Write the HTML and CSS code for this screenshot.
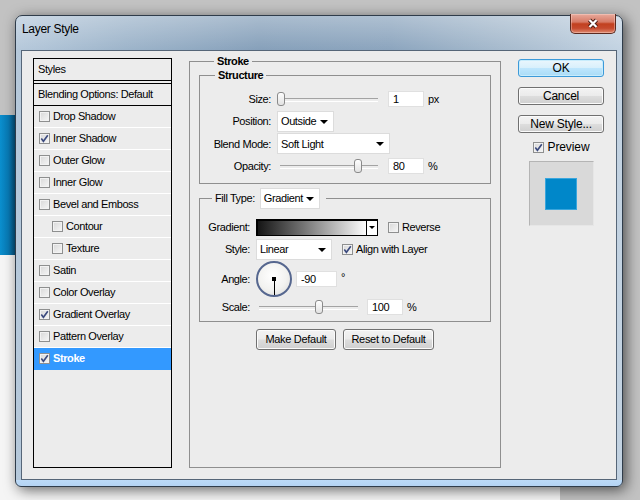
FILE: index.html
```html
<!DOCTYPE html>
<html lang="en">
<head>
    <meta charset="UTF-8">
    <title>Layer Style</title>
    <link rel="stylesheet" href="styles.css">
</head>
<body>
    <div class="window">
        <div class="titlebar">
            <span class="title">Layer Style</span>
            <div class="close">
                <svg width="14" height="11" viewBox="0 0 14 11">
                    <path d="M3.5 2 L10.5 9 M10.5 2 L3.5 9" stroke="#4b1d15" stroke-width="4.2"/>
                    <path d="M3.5 2 L10.5 9 M10.5 2 L3.5 9" stroke="#fff" stroke-width="2.2"/>
                </svg>
            </div>
        </div>

        <div class="client">
            <!-- styles list -->
            <div class="styles-list">
                <div class="list-head">Styles</div>
                <div class="list-blend">Blending Options: Default</div>
                <div class="item"><span class="cb"></span>Drop Shadow</div>
                <div class="item"><span class="cb"><svg width="9" height="9" viewBox="0 0 9 9"><path d="M1.3 4.6 L3.4 7.3 L7.8 1.2" fill="none" stroke="#3b4a7e" stroke-width="1.6"/></svg></span>Inner Shadow</div>
                <div class="item"><span class="cb"></span>Outer Glow</div>
                <div class="item"><span class="cb"></span>Inner Glow</div>
                <div class="item"><span class="cb"></span>Bevel and Emboss</div>
                <div class="item sub"><span class="cb"></span>Contour</div>
                <div class="item sub"><span class="cb"></span>Texture</div>
                <div class="item"><span class="cb"></span>Satin</div>
                <div class="item"><span class="cb"></span>Color Overlay</div>
                <div class="item"><span class="cb"><svg width="9" height="9" viewBox="0 0 9 9"><path d="M1.3 4.6 L3.4 7.3 L7.8 1.2" fill="none" stroke="#3b4a7e" stroke-width="1.6"/></svg></span>Gradient Overlay</div>
                <div class="item"><span class="cb"></span>Pattern Overlay</div>
                <div class="item sel"><span class="cb"><svg width="9" height="9" viewBox="0 0 9 9"><path d="M1.3 4.6 L3.4 7.3 L7.8 1.2" fill="none" stroke="#3b4a7e" stroke-width="1.6"/></svg></span>Stroke</div>
            </div>

            <!-- stroke settings -->
            <fieldset class="stroke-box">
                <legend>Stroke</legend>

                <fieldset class="group structure">
                    <legend>Structure</legend>
                    <div class="grid structure-grid">
                        <span class="lbl">Size:</span>
                        <div class="ctrl">
                            <div class="slider"><span class="thumb" style="left: 0px"></span></div>
                            <span class="field gap10">1</span>
                            <span class="unit">px</span>
                        </div>

                        <span class="lbl">Position:</span>
                        <div class="ctrl"><div class="select pos">Outside</div></div>

                        <span class="lbl">Blend Mode:</span>
                        <div class="ctrl"><div class="select blend">Soft Light</div></div>

                        <span class="lbl">Opacity:</span>
                        <div class="ctrl">
                            <div class="slider inset"><span class="thumb" style="left: 77px"></span></div>
                            <span class="field gap10">80</span>
                            <span class="unit">%</span>
                        </div>
                    </div>
                </fieldset>

                <fieldset class="group fill">
                    <legend><span>Fill Type:</span><div class="select filltype">Gradient</div></legend>
                    <div class="grid fill-grid">
                        <span class="lbl">Gradient:</span>
                        <div class="ctrl">
                            <div class="grad"><span class="grad-fill"></span><span class="grad-drop"></span></div>
                            <span class="cb gap10"></span>
                            <span class="cb-text">Reverse</span>
                        </div>

                        <span class="lbl">Style:</span>
                        <div class="ctrl">
                            <div class="select style">Linear</div>
                            <span class="cb gap10"><svg width="9" height="9" viewBox="0 0 9 9"><path d="M1.3 4.6 L3.4 7.3 L7.8 1.2" fill="none" stroke="#3b4a7e" stroke-width="1.6"/></svg></span>
                            <span class="cb-text">Align with Layer</span>
                        </div>

                        <span class="lbl">Angle:</span>
                        <div class="ctrl">
                            <div class="dial"></div>
                            <span class="field angle">-90</span>
                            <span class="deg">°</span>
                        </div>

                        <span class="lbl">Scale:</span>
                        <div class="ctrl">
                            <div class="slider scale"><span class="thumb" style="left: 59px"></span></div>
                            <span class="field gap9">100</span>
                            <span class="unit">%</span>
                        </div>
                    </div>
                </fieldset>

                <div class="defaults">
                    <button class="btn small make">Make Default</button>
                    <button class="btn small reset">Reset to Default</button>
                </div>
            </fieldset>

            <!-- dialog buttons -->
            <div class="side">
                <button class="btn big ok">OK</button>
                <button class="btn big">Cancel</button>
                <button class="btn big last">New Style...</button>
                <div class="preview-row">
                    <span class="cb"><svg width="9" height="9" viewBox="0 0 9 9"><path d="M1.3 4.6 L3.4 7.3 L7.8 1.2" fill="none" stroke="#3b4a7e" stroke-width="1.6"/></svg></span>
                    <span>Preview</span>
                </div>
                <div class="preview-box"><div class="swatch"></div></div>
            </div>
        </div>
    </div>
</body>
</html>
```

FILE: styles.css
```css
* {
    box-sizing: border-box;
}

body {
    margin: 0;
    width: 640px;
    height: 500px;
    overflow: hidden;
    position: relative;
    font-family: "Liberation Sans", Arial, sans-serif;
    font-size: 11px;
    letter-spacing: -0.4px;
    color: #000;
    background:
        linear-gradient(to right, #0b8fce, #0878b2 60%, #06527c) 0 115px / 15px 140px no-repeat,
        linear-gradient(#f5f5f5, #f5f5f5) 0 255px / 560px 245px no-repeat,
        #c2c2c2;
}

/* window frame */
.window {
    position: absolute;
    left: 15px;
    top: 15px;
    width: 608px;
    height: 472px;
    border: 1px solid #2f3c4a;
    border-radius: 7px 7px 6px 6px;
    padding: 0 5px 6px 5px;
    display: flex;
    flex-direction: column;
    box-shadow: 3px 3px 14px rgba(0, 0, 0, 0.6);
    background:
        linear-gradient(rgba(255, 255, 255, 0.3), rgba(255, 255, 255, 0) 34px) top / 100% 34px no-repeat,
        linear-gradient(#bcdaf7, #b4d3f3) bottom / 100% 6px no-repeat,
        linear-gradient(to right, #b6c9db 0%, #9db4ca 18%, #86a0ba 40%, #8ca5be 62%, #a6bacd 80%, #c3d3e2 100%);
}

.titlebar {
    height: 34px;
    display: flex;
    align-items: flex-start;
}

.title {
    font-size: 12px;
    letter-spacing: -0.3px;
    margin: 6px 0 0 1px;
}

.close {
    margin: -2px 1px 0 auto;
    width: 46px;
    height: 20px;
    border: 1px solid #5b2a20;
    border-top: none;
    border-radius: 0 0 5px 5px;
    display: flex;
    align-items: center;
    justify-content: center;
    background: linear-gradient(#e8aa9c, #d77a66 42%, #c2401f 52%, #c64a2e 75%, #df8a70);
    box-shadow: inset 0 0 0 1px rgba(255, 220, 210, 0.4);
}

.client {
    flex: 1;
    display: flex;
    align-items: flex-start;
    padding: 7px 0 0 11px;
    border: 1px solid #566678;
    background: #ececec;
}

/* styles list */
.styles-list {
    width: 139px;
    height: 410px;
    border: 1px solid #000;
    display: flex;
    flex-direction: column;
    flex: none;
}

.list-head {
    height: 22px;
    border-bottom: 1px solid #000;
    margin-bottom: 2px;
    padding: 0 0 2px 4px;
    display: flex;
    align-items: center;
}

.list-blend {
    height: 23px;
    border-top: 1px solid #000;
    border-bottom: 1px solid #000;
    padding: 0 0 2px 4px;
    display: flex;
    align-items: center;
}

.item {
    height: 22px;
    border-bottom: 1px solid #fff;
    padding: 0 0 1px 5px;
    display: flex;
    align-items: center;
    gap: 3px;
}

.item .cb {
    margin-top: 1px;
}

.item.sub {
    padding-left: 18px;
}

.item.sel {
    background: #3399ff;
    border-bottom-color: #3399ff;
    color: #fff;
    font-weight: bold;
}

/* checkbox */
.cb {
    width: 11px;
    height: 11px;
    flex: none;
    border: 1px solid #8e8f8f;
    background: linear-gradient(135deg, #d8d8d8, #f6f6f6);
    box-shadow: inset 0 0 0 1px #f2f2f2;
    display: inline-flex;
    align-items: center;
    justify-content: center;
}

.cb-text {
    margin-left: 3px;
}

/* stroke panel */
fieldset {
    margin: 0;
    min-width: 0;
    border: 1px solid #8f8f8f;
}

legend {
    padding: 0 3px;
    margin-left: 15px;
    line-height: 13px;
    font-weight: bold;
}

.stroke-box {
    margin: -3px 0 0 17px;
    width: 312px;
    height: 413px;
    padding: 1px 9px 0;
    flex: none;
}

.group {
    padding: 6px 0 6px;
}

.fill {
    margin-top: 4px;
    padding: 8px 0 4px;
}

.fill legend {
    margin-left: 12px;
    padding: 0 6px 0 3px;
    display: flex;
    align-items: center;
    gap: 5px;
    font-weight: normal;
}

.grid {
    display: grid;
    column-gap: 6px;
    align-items: center;
}

.structure-grid {
    grid-template-columns: 71px 1fr;
    grid-auto-rows: 21px;
    row-gap: 1.5px;
}

.fill-grid {
    grid-template-columns: 50px 1fr;
    grid-template-rows: 21px 21px 36px 19px;
    row-gap: 1px;
}

.lbl {
    text-align: right;
}

.ctrl {
    display: flex;
    align-items: center;
}

/* selects and fields */
.select {
    position: relative;
    height: 21px;
    padding-left: 3px;
    background: #fff;
    border: 1px solid #dcdcdc;
    display: flex;
    align-items: center;
}

.select::after {
    content: "";
    position: absolute;
    right: 5px;
    top: 8px;
    border-left: 4px solid transparent;
    border-right: 4px solid transparent;
    border-top: 4px solid #000;
}

.pos { width: 57px; }
.blend { width: 113px; }
.filltype { width: 60px; }
.style { width: 76px; }

.field {
    width: 36px;
    height: 16px;
    padding-left: 4px;
    background: #fff;
    border: 1px solid #e0e0e0;
    display: flex;
    align-items: center;
}

.gap10 { margin-left: 10px; }
.gap9 { margin-left: 9px; }

.unit {
    margin-left: 4px;
}

/* sliders */
.slider {
    position: relative;
    width: 101px;
    height: 16px;
    flex: none;
}

.slider::before {
    content: "";
    position: absolute;
    left: 1px;
    right: 0;
    top: 7px;
    height: 2px;
    border-top: 1px solid #a3a3a3;
    border-bottom: 1px solid #fff;
}

.slider.inset::before {
    left: 3px;
}

.slider.scale {
    width: 102px;
}

.slider.scale::before {
    left: 3px;
}

.thumb {
    position: absolute;
    top: 1px;
    width: 8px;
    height: 14px;
    border: 1px solid #8a8a8a;
    border-radius: 3px;
    background: linear-gradient(#fefefe, #e2e2e2);
}

/* gradient swatch */
.grad {
    width: 122px;
    height: 17px;
    border: 1px solid #000;
    border-top-width: 2px;
    border-left-width: 2px;
    display: flex;
}

.grad-fill {
    flex: 1;
    background: linear-gradient(to right, #151515, #6f6f6f 40%, #fdfdfd);
}

.grad-drop {
    position: relative;
    width: 11px;
    border-left: 1px solid #000;
    background: #fff;
}

.grad-drop::after {
    content: "";
    position: absolute;
    left: 2px;
    top: 5px;
    border-left: 3px solid transparent;
    border-right: 3px solid transparent;
    border-top: 3px solid #000;
}

/* angle dial */
.dial {
    position: relative;
    width: 36px;
    height: 36px;
    flex: none;
    border-radius: 50%;
    border: 2px solid #56678f;
    background: radial-gradient(circle at 45% 40%, #ffffff, #f2f2f0 55%, #d9d9d6);
}

.dial::before {
    content: "";
    position: absolute;
    left: 14px;
    top: 14px;
    width: 4px;
    height: 4px;
    background: #000;
}

.dial::after {
    content: "";
    position: absolute;
    left: 15.5px;
    top: 16px;
    width: 1px;
    height: 16px;
    background: #000;
}

.field.angle {
    width: 41px;
    margin-left: 4px;
}

.deg {
    margin-left: 4px;
    align-self: flex-start;
    margin-top: 10px;
}

.defaults {
    margin-top: 7px;
    display: flex;
    justify-content: center;
    gap: 7px;
}

/* buttons */
.btn {
    font-family: "Liberation Sans", Arial, sans-serif;
    color: #000;
    padding: 0;
    border: 1px solid #707070;
    border-radius: 3px;
    background: linear-gradient(#f3f3f3, #ebebeb 48%, #dddddd 52%, #cfcfcf);
    box-shadow: inset 0 0 0 1px #fbfbfb;
}

.btn.small {
    height: 21px;
    font-size: 11px;
    letter-spacing: -0.3px;
}

.make { width: 80px; }
.reset { width: 91px; }

.side {
    margin: 1px 0 0 17px;
    width: 86px;
    display: flex;
    flex-direction: column;
    align-items: center;
    flex: none;
}

.btn.big {
    width: 86px;
    height: 18px;
    margin-bottom: 10px;
    font-size: 12px;
    letter-spacing: -0.2px;
}

.btn.ok {
    border-color: #3c9ad9;
    background: linear-gradient(#eaf6fd, #d9f0fc 48%, #bee6fd 52%, #a9dbf6);
    box-shadow: inset 0 0 0 1px #c8ecfc;
}

.btn.last {
    margin-bottom: 8px;
}

.preview-row {
    height: 12px;
    display: flex;
    align-items: center;
    gap: 4px;
    font-size: 12px;
    letter-spacing: -0.1px;
}

.preview-box {
    margin-top: 8px;
    width: 65px;
    height: 65px;
    background: #d9d9d9;
    border: 1px solid #b4b4b4;
    border-right-color: #e6e6e6;
    border-bottom-color: #e6e6e6;
    display: flex;
    align-items: center;
    justify-content: center;
}

.swatch {
    width: 32px;
    height: 32px;
    background: #0087c9;
    border: 1px solid #3aa6dd;
}
```
